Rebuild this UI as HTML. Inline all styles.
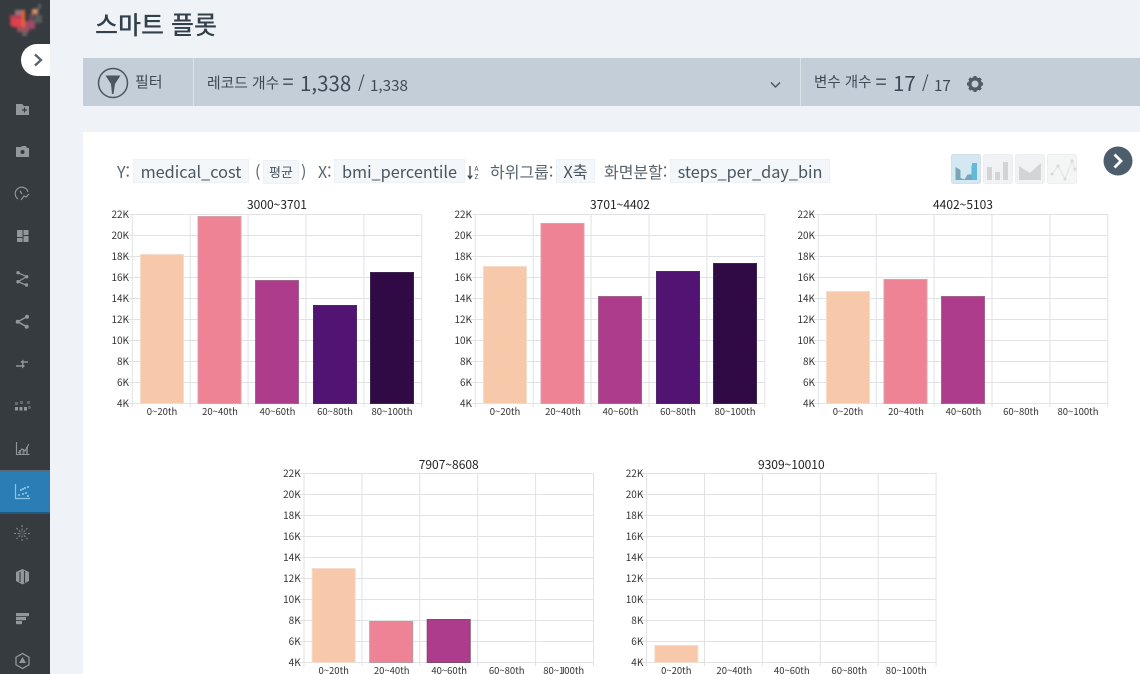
<!DOCTYPE html>
<html lang="ko"><head><meta charset="utf-8"><style>
html,body{margin:0;padding:0;width:1140px;height:674px;overflow:hidden;background:#eff3f7}
body{position:relative;font-family:"Noto Sans CJK KR","Liberation Sans",sans-serif;color:#3d4a55}
.a{position:absolute;white-space:nowrap}
.chip{position:absolute;background:#f3f7fa;border:1px solid #edf1f5;box-sizing:border-box;height:24px;line-height:22px;font-size:16.300px;text-align:center;color:#49565f;white-space:nowrap}
.lb{position:absolute;font-size:16px;line-height:24px;color:#59646d;white-space:nowrap}
svg text{font-family:"Noto Sans CJK KR","Liberation Sans",sans-serif}
.t{font-size:10px;fill:#333;text-anchor:end}
.x{font-size:9.500px;fill:#333;text-anchor:middle}
.h{font-size:12px;fill:#222;text-anchor:middle}
.g{stroke:#e0e2e5;stroke-width:1;fill:none}
</style></head><body>
<div class="a" style="left:0;top:0;width:50px;height:674px;background:#353b3f"></div>

<svg class="a" style="left:0;top:0" width="50" height="674" viewBox="0 0 50 674">
<defs><filter id="b" x="-30%" y="-30%" width="160%" height="160%"><feGaussianBlur stdDeviation="1.300"/></filter></defs>
<g filter="url(#b)">
<rect x="15" y="10" width="8" height="8" fill="#94747a"/>
<rect x="10" y="15" width="12" height="11" fill="#b8414f"/>
<rect x="12" y="19" width="10" height="8" fill="#e0404e"/>
<rect x="22" y="10" width="3" height="20" fill="#e8652e"/>
<rect x="25" y="21" width="10" height="8" fill="#a04a68"/>
<rect x="32" y="9" width="6" height="5" fill="#d99068"/>
<rect x="29" y="14" width="5" height="7" fill="#6e4a55"/>
<rect x="17" y="27" width="12" height="5" fill="#a0505c"/>
<rect x="22" y="31" width="5" height="5" fill="#6b6463"/>
<rect x="38" y="4" width="3" height="5" fill="#5c6366"/>
<rect x="35" y="15" width="7" height="8" fill="#575d60"/>
</g>
<g fill="#92989b">
<path d="M16 104h6l2 2h5v9H16z"/>
<path d="M16 147h5l1-1h4l1 2h2v9H16z"/>
</g>
<path d="M22 110h5M24.500 107.500v5" stroke="#353b3f" stroke-width="1.200"/>
<circle cx="22.500" cy="152" r="2" fill="#353b3f"/>
<g fill="none" stroke="#8f9598" stroke-width="1.200">
<path d="M18 199a6.500 6.500 0 1 1 10-7"/><path d="M21 200l3-4 2 1 3-3"/><path d="M20 191l2 3"/>
<path d="M18 272.700l8.700 4-8.700 5 8 3.300" stroke-width="1.300"/>
<path d="M27 316.700l-9.300 5 9 5" stroke-width="1.500"/>
<path d="M16 366h6M28 362h-5" stroke-width="1.500"/>
<path d="M16.500 442v12.500H29.500" stroke-width="1.100"/>
<path d="M18 453l4-4 3 2 4-7" stroke-width="1.100"/>
<path d="M22.500 653.500l6.500 3.700v7.600l-6.500 3.700-6.500-3.700v-7.600z" stroke-width="1.300"/>
</g>
<g fill="#91979a">
<rect x="17" y="230" width="5.500" height="7"/><rect x="23.500" y="230" width="5" height="5"/><rect x="17" y="238" width="5.500" height="4"/><rect x="23.500" y="236" width="5" height="6"/>
<circle cx="18" cy="272.700" r="1.700"/><circle cx="26.700" cy="276.700" r="1.700"/><circle cx="18" cy="281.700" r="1.700"/><circle cx="26.500" cy="285" r="1.700"/>
<circle cx="27" cy="316.700" r="2"/><circle cx="17.700" cy="321.700" r="2"/><circle cx="26.700" cy="326.700" r="2"/>
<path d="M22 363.500v5l3-2.500zM23.500 359.500v5l-3-2.500z"/>
<rect x="15" y="407" width="3" height="3.500"/><rect x="19.500" y="407" width="3" height="3.500"/><rect x="24" y="407" width="3" height="3.500"/><rect x="15" y="402" width="3" height="3" opacity=".5"/><rect x="20" y="401" width="3" height="3" opacity=".5"/><rect x="27" y="401" width="3" height="3" opacity=".45"/><rect x="28" y="406" width="3" height="3" opacity=".4"/>
<rect x="19" y="450" width="2" height="4" opacity=".7"/><rect x="22.500" y="449" width="2" height="5" opacity=".7"/><rect x="26" y="447" width="2" height="7" opacity=".7"/>
<path d="M16 572l6.500-3 6.500 3v9l-6.500 3.500-6.500-3.500z"/>
<rect x="16" y="613" width="13" height="3.200"/><rect x="16" y="617" width="10" height="3.200"/><rect x="16" y="621" width="6" height="3.200"/>
<path d="M22.500 657l3.500 6h-7z"/>
</g>
<path d="M20 572v10M24.500 571v12" stroke="#353b3f" stroke-width="1.100"/>
<g stroke="#85898c" stroke-width="1.100" stroke-dasharray="2 1.500">
<path d="M22 525v17M14 533.500h17M16.500 528l11 11M27.500 528l-11 11"/></g>
<circle cx="22" cy="533.500" r="2.500" fill="#44494d"/>
<rect x="0" y="471" width="50" height="42" fill="#2a7db5"/>
<rect x="0" y="470" width="50" height="2" fill="#5b6b75"/>
<rect x="0" y="512" width="50" height="2" fill="#1f5a85"/>
<path d="M15.500 484v14.500H30" fill="none" stroke="#8fc3e4" stroke-width="1.200"/>
<g fill="#9accea"><circle cx="19" cy="495" r="1"/><circle cx="21" cy="490" r="1"/><circle cx="23" cy="494" r="1"/><circle cx="25" cy="488" r="1"/><circle cx="26" cy="493" r="1"/><circle cx="28" cy="487" r="1"/><circle cx="28" cy="496" r="1"/><circle cx="23" cy="489" r="1"/></g>
</svg>

<svg class="a" style="left:20px;top:44px" width="30" height="32" viewBox="0 0 30 32">
<path d="M30 0H17a16 16 0 0 0 0 32H30z" fill="#fff"/>
<path d="M15 10.500l6 5.500-6 5.500" fill="none" stroke="#5b6369" stroke-width="2.300"/>
</svg>

<div class="a" style="left:95px;top:6px;font-size:25px;line-height:36px;color:#33404a;font-weight:500">스마트 플롯</div>

<div class="a" style="left:83px;top:58px;width:1057px;height:48px;background:#c3ced8"></div>
<div class="a" style="left:193px;top:58px;width:1px;height:48px;background:#dbe3ea"></div>
<div class="a" style="left:800px;top:58px;width:1px;height:48px;background:#dbe3ea"></div>
<svg class="a" style="left:96px;top:66px" width="34" height="34" viewBox="0 0 34 34">
<circle cx="17" cy="17" r="14.500" fill="none" stroke="#4a5761" stroke-width="1.500"/>
<path d="M9.500 9.500h15l-5.500 8.500-1.500 10h-1.500l-1-10z" fill="#4a5761"/>
</svg>
<div class="a" style="left:135px;top:71px;font-size:15px;line-height:22px;color:#3d4a55">필터</div>
<div class="a" style="left:207px;top:72px;font-size:14.800px;line-height:22px;color:#3d4a55">레코드 개수</div>
<div class="a" style="left:282.500px;top:69px;font-size:20px;line-height:24px;color:#3d4a55">=</div>
<div class="a" style="left:300px;top:67px;font-size:20.500px;line-height:30px;color:#3d4a55">1,338</div>
<div class="a" style="left:358px;top:70px;font-size:17px;line-height:24px;color:#3d4a55">/</div>
<div class="a" style="left:370px;top:73px;font-size:15.200px;line-height:24px;color:#3d4a55">1,338</div>
<svg class="a" style="left:769px;top:80px" width="13" height="10"><path d="M2 2.500l4.500 4.500L11 2.500" fill="none" stroke="#4a5761" stroke-width="1.500"/></svg>
<div class="a" style="left:814px;top:71px;font-size:14.500px;line-height:22px;color:#3d4a55">변수 개수</div>
<div class="a" style="left:875.500px;top:69px;font-size:20px;line-height:24px;color:#3d4a55">=</div>
<div class="a" style="left:893px;top:67px;font-size:20.500px;line-height:30px;color:#3d4a55">17</div>
<div class="a" style="left:922px;top:70px;font-size:17px;line-height:24px;color:#3d4a55">/</div>
<div class="a" style="left:934px;top:73px;font-size:15.200px;line-height:24px;color:#3d4a55">17</div>
<svg class="a" style="left:966px;top:75px" width="18" height="18" viewBox="0 0 18 18">
<circle cx="9" cy="9" r="5.200" fill="none" stroke="#4f5c66" stroke-width="3.400"/>
<path d="M9 1v3M9 14v3M1 9h3M14 9h3M3.300 3.300l2.200 2.200M12.500 12.500l2.200 2.200M14.700 3.300l-2.200 2.200M5.500 12.500l-2.200 2.200" stroke="#4f5c66" stroke-width="3"/>
</svg>

<div class="a" style="left:83px;top:132px;width:1057px;height:542px;background:#fff"></div>

<div class="lb" style="left:117px;top:159px">Y:</div>
<div class="chip" style="left:133px;top:159px;width:116px">medical_cost</div>
<div class="lb" style="left:255px;top:159px">(</div>
<div class="chip" style="left:263px;top:160px;width:36px;font-size:13px">평균</div>
<div class="lb" style="left:301px;top:159px">)</div>
<div class="lb" style="left:318px;top:159px">X:</div>
<div class="chip" style="left:334px;top:159px;width:131px">bmi_percentile</div>
<svg class="a" style="left:467px;top:164px" width="14" height="17" viewBox="0 0 14 17"><path d="M3 2v12M.8 11.500L3 14.500l2.200-3" fill="none" stroke="#3d4a55" stroke-width="1.300"/><text x="9.500" y="7" font-size="6.500" text-anchor="middle" fill="#3d4a55">A</text><text x="9.500" y="15" font-size="6.500" text-anchor="middle" fill="#3d4a55">Z</text></svg>
<div class="lb" style="left:490px;top:159px">하위그룹:</div>
<div class="chip" style="left:556px;top:159px;width:39px">X축</div>
<div class="lb" style="left:604px;top:159px">화면분할:</div>
<div class="chip" style="left:670px;top:159px;width:160px">steps_per_day_bin</div>

<svg class="a" style="left:950px;top:152px" width="130" height="34" viewBox="0 0 130 34">
<rect x="1.500" y="2.500" width="29" height="29" rx="2" fill="#d3e8f3" stroke="#d4dfe6"/>
<rect x="33.500" y="2.500" width="29" height="29" rx="2" fill="#f1f2f3" stroke="#eceeef"/>
<rect x="65.500" y="2.500" width="29" height="29" rx="2" fill="#f1f2f3" stroke="#eceeef"/>
<rect x="97.500" y="2.500" width="29" height="29" rx="2" fill="#f4f5f5" stroke="#eceeef"/>
<path d="M5.500 15l5 3v8l4 1.500 3-5 4 0v-9l5-2.500V28h-21z" fill="#78a6b6"/>
<rect x="22" y="11" width="5" height="17" fill="#62b9d8"/>
<g fill="#d2d4d6"><rect x="37" y="15" width="5" height="13"/><rect x="45" y="20" width="5" height="8"/><rect x="53" y="10" width="5" height="18"/></g>
<path d="M69 14l11 7 11-10v17H69z" fill="#d2d4d6"/>
<g fill="none" stroke="#e2e3e4"><path d="M102 22l6-8 7 13 7-18 3 8"/></g>
<g fill="#d6d8da"><circle cx="102" cy="22" r="1.500"/><circle cx="108" cy="14" r="1.500"/><circle cx="115" cy="27" r="1.500"/><circle cx="122" cy="9" r="1.500"/><circle cx="125" cy="17" r="1.500"/></g>
</svg>
<svg class="a" style="left:1103px;top:146px" width="30" height="30" viewBox="0 0 30 30"><circle cx="15" cy="15" r="14.500" fill="#4d5d6b"/><path d="M11.500 8.500L18 15l-6.500 6.500" fill="none" stroke="#fff" stroke-width="2.800"/></svg>

<svg class="a" style="left:0;top:0" width="1140" height="674" viewBox="0 0 1140 674">
<defs>
<g id="grid">
<path class="g" d="M132 214.500H422M132 235.500H422M132 256.500H422M132 277.500H422M132 298.500H422M132 319.500H422M132 340.500H422M132 361.500H422M132 382.500H422M132 403.500H422M132.300 214V404M190.200 214V404M248.100 214V404M306 214V404M363.900 214V404M421.800 214V404"/>
<path d="M127 214.500h5M127 235.500h5M127 256.500h5M127 277.500h5M127 298.500h5M127 319.500h5M127 340.500h5M127 361.500h5M127 382.500h5M127 403.500h5M132.300 404v3M190.200 404v3M248.100 404v3M306 404v3M363.900 404v3M421.800 404v3" stroke="#e0e2e5" fill="none"/>
</g>
</defs>

<g>
<use href="#grid"/>
<rect x="140.500" y="254.500" width="43" height="149" fill="#f7c8aa" stroke="#f3dccb"/>
<rect x="198" y="216.500" width="43" height="187" fill="#ef8396" stroke="#d8a0a8"/>
<rect x="255.500" y="280.500" width="43" height="123" fill="#ae3c8c" stroke="#a2648f"/>
<rect x="313.500" y="305.500" width="43" height="98" fill="#521472" stroke="#4b2a68"/>
<rect x="370.500" y="272.500" width="43" height="131" fill="#300a44" stroke="#3c2650"/>
<text class="h" x="277" y="209">3000~3701</text>
<text class="t" x="129" y="218">22K</text><text class="t" x="129" y="239">20K</text><text class="t" x="129" y="260">18K</text><text class="t" x="129" y="281">16K</text><text class="t" x="129" y="302">14K</text><text class="t" x="129" y="323">12K</text><text class="t" x="129" y="344">10K</text><text class="t" x="129" y="365">8K</text><text class="t" x="129" y="386">6K</text><text class="t" x="129" y="407">4K</text>
<text class="x" x="162" y="415">0~20th</text><text class="x" x="220" y="415">20~40th</text><text class="x" x="277.500" y="415">40~60th</text><text class="x" x="335" y="415">60~80th</text><text class="x" x="392" y="415">80~100th</text>
</g>

<g transform="translate(343 0)">
<use href="#grid"/>
<rect x="140.500" y="266.500" width="43" height="137" fill="#f7c8aa" stroke="#f3dccb"/>
<rect x="198" y="223.500" width="43" height="180" fill="#ef8396" stroke="#d8a0a8"/>
<rect x="255.500" y="296.500" width="43" height="107" fill="#ae3c8c" stroke="#a2648f"/>
<rect x="313.500" y="271.500" width="43" height="132" fill="#521472" stroke="#4b2a68"/>
<rect x="370.500" y="263.500" width="43" height="140" fill="#300a44" stroke="#3c2650"/>
<text class="h" x="277" y="209">3701~4402</text>
<text class="t" x="129" y="218">22K</text><text class="t" x="129" y="239">20K</text><text class="t" x="129" y="260">18K</text><text class="t" x="129" y="281">16K</text><text class="t" x="129" y="302">14K</text><text class="t" x="129" y="323">12K</text><text class="t" x="129" y="344">10K</text><text class="t" x="129" y="365">8K</text><text class="t" x="129" y="386">6K</text><text class="t" x="129" y="407">4K</text>
<text class="x" x="162" y="415">0~20th</text><text class="x" x="220" y="415">20~40th</text><text class="x" x="277.500" y="415">40~60th</text><text class="x" x="335" y="415">60~80th</text><text class="x" x="392" y="415">80~100th</text>
</g>

<g transform="translate(686 0)">
<use href="#grid"/>
<rect x="140.500" y="291.500" width="43" height="112" fill="#f7c8aa" stroke="#f3dccb"/>
<rect x="198" y="279.500" width="43" height="124" fill="#ef8396" stroke="#d8a0a8"/>
<rect x="255.500" y="296.500" width="43" height="107" fill="#ae3c8c" stroke="#a2648f"/>
<text class="h" x="277" y="209">4402~5103</text>
<text class="t" x="129" y="218">22K</text><text class="t" x="129" y="239">20K</text><text class="t" x="129" y="260">18K</text><text class="t" x="129" y="281">16K</text><text class="t" x="129" y="302">14K</text><text class="t" x="129" y="323">12K</text><text class="t" x="129" y="344">10K</text><text class="t" x="129" y="365">8K</text><text class="t" x="129" y="386">6K</text><text class="t" x="129" y="407">4K</text>
<text class="x" x="162" y="415">0~20th</text><text class="x" x="220" y="415">20~40th</text><text class="x" x="277.500" y="415">40~60th</text><text class="x" x="335" y="415">60~80th</text><text class="x" x="392" y="415">80~100th</text>
</g>

<g transform="translate(171.700 259)">
<use href="#grid"/>
<rect x="140.500" y="309.500" width="43" height="94" fill="#f7c8aa" stroke="#f3dccb"/>
<rect x="198" y="362.500" width="43" height="41" fill="#ef8396" stroke="#b89aa0"/>
<rect x="255.500" y="360.500" width="43" height="43" fill="#ae3c8c" stroke="#7a4a72"/>
<text class="h" x="277" y="210">7907~8608</text>
<text class="t" x="129" y="218">22K</text><text class="t" x="129" y="239">20K</text><text class="t" x="129" y="260">18K</text><text class="t" x="129" y="281">16K</text><text class="t" x="129" y="302">14K</text><text class="t" x="129" y="323">12K</text><text class="t" x="129" y="344">10K</text><text class="t" x="129" y="365">8K</text><text class="t" x="129" y="386">6K</text><text class="t" x="129" y="407">4K</text>
<text class="x" x="162" y="415">0~20th</text><text class="x" x="220" y="415">20~40th</text><text class="x" x="277.500" y="415">40~60th</text><text class="x" x="335" y="415">60~80th</text><text class="x" x="392" y="415">80~100th</text>
</g>

<g transform="translate(514.300 259)">
<use href="#grid"/>
<rect x="140.500" y="386.500" width="43" height="17" fill="#f7c8aa" stroke="#f3dccb"/>
<text class="h" x="277" y="210">9309~10010</text>
<text class="t" x="129" y="218">22K</text><text class="t" x="129" y="239">20K</text><text class="t" x="129" y="260">18K</text><text class="t" x="129" y="281">16K</text><text class="t" x="129" y="302">14K</text><text class="t" x="129" y="323">12K</text><text class="t" x="129" y="344">10K</text><text class="t" x="129" y="365">8K</text><text class="t" x="129" y="386">6K</text><text class="t" x="129" y="407">4K</text>
<text class="x" x="162" y="415">0~20th</text><text class="x" x="220" y="415">20~40th</text><text class="x" x="277.500" y="415">40~60th</text><text class="x" x="335" y="415">60~80th</text><text class="x" x="392" y="415">80~100th</text>
</g>
<path d="M563.500 667v6" stroke="#555" stroke-width="1"/>
</svg>
</body></html>
